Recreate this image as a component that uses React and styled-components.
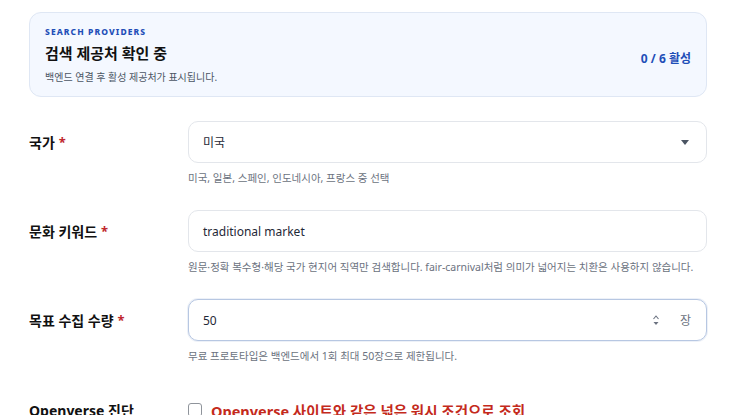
import React from "react";
import styled, { createGlobalStyle } from "styled-components";

const Global = createGlobalStyle`
  html, body { margin: 0; padding: 0; background: #ffffff; }
  body { font-family: "Noto Sans", "Noto Sans CJK KR", sans-serif; color: #111827; }
  * { box-sizing: border-box; }
`;

const Page = styled.div`
  width: 736px;
  height: 415px;
  overflow: hidden;
  padding: 12px 29px 0 29px;
  display: flex;
  flex-direction: column;
`;

const Card = styled.section`
  border: 1px solid #dfe7f4;
  background: #f4f8ff;
  border-radius: 12px;
  padding: 13px 15px 12px 15px;
  display: flex;
  align-items: center;
  justify-content: space-between;
`;

const CardText = styled.div`
  display: flex;
  flex-direction: column;
`;

const Eyebrow = styled.div`
  font-size: 8.5px;
  font-weight: 800;
  letter-spacing: 1.1px;
  color: #1f4fb8;
  line-height: 12px;
`;

const CardTitle = styled.h2`
  margin: 5px 0 0 0;
  font-size: 15px;
  font-weight: 700;
  line-height: 20px;
  color: #111111;
`;

const CardSub = styled.p`
  margin: 7px 0 0 0;
  font-size: 10px;
  line-height: 14px;
  color: #4b5563;
`;

const Count = styled.div`
  font-size: 12px;
  font-weight: 700;
  color: #1f4fb8;
  margin-top: 6px;
`;

const Form = styled.div`
  margin-top: 24px;
  display: flex;
  flex-direction: column;
  gap: 25px;
`;

const Row = styled.div`
  display: grid;
  grid-template-columns: 159px 1fr;
  align-items: start;
`;

const Label = styled.label`
  height: 42px;
  display: flex;
  align-items: center;
  gap: 4px;
  font-size: 14px;
  font-weight: 700;
  color: #111111;
`;

const Req = styled.span`
  color: #c0272d;
  font-weight: 700;
  font-size: 13px;
`;

const Field = styled.div`
  display: flex;
  flex-direction: column;
  gap: 8px;
`;

const Box = styled.div`
  position: relative;
  height: 42px;
  border: 1px solid ${(p) => (p.$focus ? "#b7c7e2" : "#e3e6eb")};
  border-radius: 10px;
  background: #ffffff;
  display: flex;
  align-items: center;
  padding: 0 14px;
  font-size: 12px;
  color: #1f2937;
  box-shadow: ${(p) => (p.$focus ? "0 0 0 1px rgba(183,199,226,0.25)" : "none")};
`;

const Value = styled.span`
  flex: 1;
`;

const Caret = styled.svg`
  width: 8px;
  height: 5px;
  margin-right: 3px;
`;

const Spinner = styled.svg`
  width: 6px;
  height: 11px;
  margin-right: 21px;
`;

const Unit = styled.span`
  font-size: 12px;
  color: #6b7280;
  margin-right: 1px;
`;

const Help = styled.div`
  font-size: 10.5px;
  line-height: 14px;
  color: #6b7280;
  white-space: nowrap;
`;

const CheckLine = styled.div`
  height: 42px;
  display: flex;
  align-items: center;
  gap: 9px;
  padding-top: 2px;
`;

const Check = styled.span`
  width: 14px;
  height: 14px;
  border: 1px solid #8f949b;
  border-radius: 3px;
  background: #ffffff;
  flex: none;
`;

const Warn = styled.span`
  font-size: 14.5px;
  font-weight: 700;
  color: #c42a1c;
`;

const CheckLabel = styled(Label)`
  padding-top: 2px;
`;

export default function App() {
  return (
    <>
      <Global />
      <Page>
        <Card>
          <CardText>
            <Eyebrow>SEARCH PROVIDERS</Eyebrow>
            <CardTitle>검색 제공처 확인 중</CardTitle>
            <CardSub>백엔드 연결 후 활성 제공처가 표시됩니다.</CardSub>
          </CardText>
          <Count>0 / 6 활성</Count>
        </Card>

        <Form>
          <Row>
            <Label>
              국가 <Req>*</Req>
            </Label>
            <Field>
              <Box>
                <Value>미국</Value>
                <Caret viewBox="0 0 8 5">
                  <path d="M0 0 L8 0 L4 5 Z" fill="#4b5563" />
                </Caret>
              </Box>
              <Help>미국, 일본, 스페인, 인도네시아, 프랑스 중 선택</Help>
            </Field>
          </Row>

          <Row>
            <Label>
              문화 키워드 <Req>*</Req>
            </Label>
            <Field>
              <Box>
                <Value>traditional market</Value>
              </Box>
              <Help>
                원문·정확 복수형·해당 국가 현지어 직역만 검색합니다. fair-carnival처럼 의미가 넓어지는 치환은 사용하지 않습니다.
              </Help>
            </Field>
          </Row>

          <Row>
            <Label>
              목표 수집 수량 <Req>*</Req>
            </Label>
            <Field>
              <Box $focus>
                <Value>50</Value>
                <Spinner viewBox="0 0 6 11">
                  <path d="M0.5 4 L3 1 L5.5 4" fill="none" stroke="#6b7280" strokeWidth="1.1" />
                  <path d="M0.5 7 L3 10 L5.5 7 Z" fill="#6b7280" />
                </Spinner>
                <Unit>장</Unit>
              </Box>
              <Help>무료 프로토타입은 백엔드에서 1회 최대 50장으로 제한됩니다.</Help>
            </Field>
          </Row>

          <Row>
            <CheckLabel>Openverse 진단</CheckLabel>
            <CheckLine>
              <Check />
              <Warn>Openverse 사이트와 같은 넓은 원시 조건으로 조회</Warn>
            </CheckLine>
          </Row>
        </Form>
      </Page>
    </>
  );
}
